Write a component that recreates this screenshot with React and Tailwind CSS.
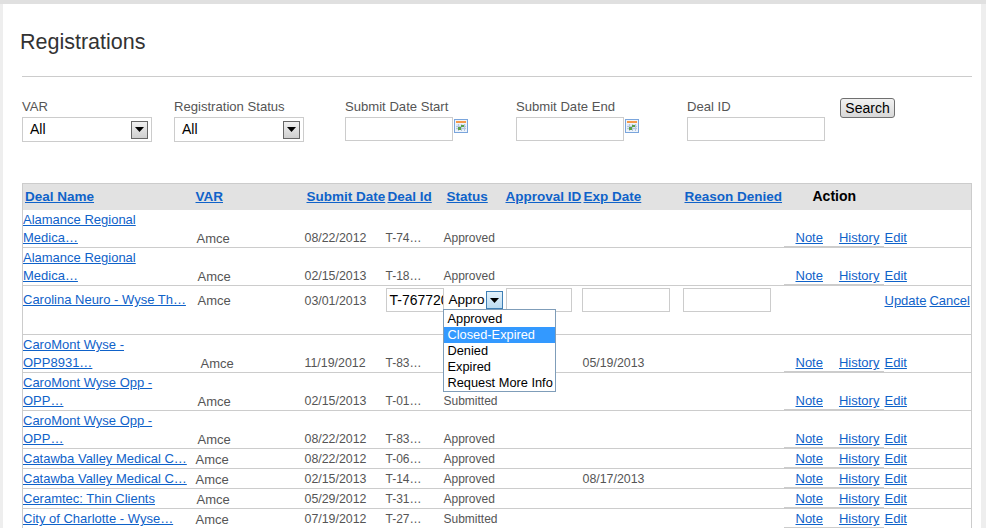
const rows = [
  { name: "Alamance Regional Medica…", var: "Amce", varPad: "pl-[1px]", date: "08/22/2012", id: "T-74…", status: "Approved", tall: true },
  { name: "Alamance Regional Medica…", var: "Amce", varPad: "pl-[2px]", date: "02/15/2013", id: "T-18…", status: "Approved", tall: true },
  { edit: true },
  { name: "CaroMont Wyse - OPP8931…", var: "Amce", varPad: "pl-[5px]", date: "11/19/2012", id: "T-83…", exp: "05/19/2013", tall: true },
  { name: "CaroMont Wyse Opp - OPP…", var: "Amce", varPad: "pl-[2px]", date: "02/15/2013", id: "T-01…", status: "Submitted", tall: true },
  { name: "CaroMont Wyse Opp - OPP…", var: "Amce", varPad: "pl-[2px]", date: "08/22/2012", id: "T-83…", status: "Approved", tall: true },
  { name: "Catawba Valley Medical C…", var: "Amce", varPad: "", date: "08/22/2012", id: "T-06…", status: "Approved" },
  { name: "Catawba Valley Medical C…", var: "Amce", varPad: "", date: "02/15/2013", id: "T-14…", status: "Approved", exp: "08/17/2013" },
  { name: "Ceramtec: Thin Clients", var: "Amce", varPad: "pl-[1px]", date: "05/29/2012", id: "T-31…", status: "Approved" },
  { name: "City of Charlotte - Wyse…", var: "Amce", varPad: "", date: "07/19/2012", id: "T-27…", status: "Submitted" },
];

const link = "text-[#0f62c9] underline";

const CalendarIcon = () => (
  <svg width="14" height="14" viewBox="0 0 14 14" className="mt-[2px] ml-[1px] shrink-0">
    <rect x="0.5" y="0.5" width="13" height="13" fill="#eef4fb" stroke="#7aa5dc" />
    <rect x="2" y="2" width="10" height="2" fill="#f5994a" />
    <path d="M2 5h10v6H2z" fill="#dfe8f3" />
    <path d="M4.5 5v7M7.5 5v7M10.5 5v7M2 7.5h10M2 9.5h10" stroke="#b4c6dc" strokeWidth="1" fill="none" />
    <rect x="4" y="8" width="3" height="3" fill="#5aa04a" />
    <rect x="7" y="6" width="3" height="2" fill="#5aa04a" />
  </svg>
);

const SelectArrow = ({ active }) => (
  <span
    className={`flex w-[17px] h-[18px] items-center justify-center border bg-gradient-to-b ${
      active ? "border-[#3f7fb5] from-[#e4f2fb] to-[#bcdcf2]" : "border-[#666] from-[#f0f0f0] to-[#cfcfcf]"
    }`}
  >
    <svg width="9" height="5" viewBox="0 0 9 5">
      <path d="M0 0h9L4.5 5z" fill="#000" />
    </svg>
  </span>
);

const FilterSelect = () => (
  <div className="flex h-[25px] w-[130px] items-center justify-between border border-[#ccc] pl-[7px] pr-[3px] text-[14px] text-black">
    All
    <SelectArrow />
  </div>
);

const Label = ({ children }) => <div className="h-[20px] text-[13.1px] leading-[20px] text-[#555]">{children}</div>;

const HeadLink = ({ pad, children }) => (
  <th className={`text-left align-middle font-bold text-[13.5px] ${pad}`}>
    <span className={`${link} whitespace-nowrap`}>{children}</span>
  </th>
);

const Actions = () => (
  <div className="ml-[1px] flex text-[13px] leading-[16px]">
    <div className="flex w-[100px] border-b border-[#ccc] pl-[12px]">
      <span className={link}>Note</span>
      <span className={`${link} ml-[16px]`}>History</span>
    </div>
    <span className={`${link} ml-[1px]`}>Edit</span>
  </div>
);

export default function App() {
  return (
    <div className="h-[528px] w-[986px] overflow-hidden border-t-[4px] border-[#e0e0e0] bg-[#eeeeee] pl-[3px] pr-[5px] font-['Liberation_Sans',Arial,sans-serif]">
      <div className="h-full bg-white pl-[17px] pr-[9px]">
        <h1 className="pt-[25px] text-[21.5px] leading-[26px] text-[#333]">Registrations</h1>
        <div className="mt-[21px] ml-[2px] border-t border-[#ccc]" />

        <div className="mt-[20px] ml-[2px] flex h-[65px] items-start">
          <div className="w-[152px]">
            <Label>VAR</Label>
            <FilterSelect />
          </div>
          <div className="w-[171px]">
            <Label>Registration Status</Label>
            <FilterSelect />
          </div>
          <div className="w-[171px]">
            <Label>Submit Date Start</Label>
            <div className="flex">
              <div className="h-[24px] w-[108px] border border-[#ccc]" />
              <CalendarIcon />
            </div>
          </div>
          <div className="w-[171px]">
            <Label>Submit Date End</Label>
            <div className="flex">
              <div className="h-[24px] w-[108px] border border-[#ccc]" />
              <CalendarIcon />
            </div>
          </div>
          <div className="w-[153px]">
            <Label>Deal ID</Label>
            <div className="h-[24px] w-[138px] border border-[#ccc]" />
          </div>
          <button className="mt-[1px] h-[20px] w-[55px] rounded-[3px] border border-[#707070] bg-gradient-to-b from-[#f2f2f2] to-[#d8d8d8] text-[14px] leading-[16px] text-black">
            Search
          </button>
        </div>

        <table className="mt-[21px] ml-[2px] w-[950px] table-fixed border-collapse border-x border-[#ccc] text-[13px] text-[#555]">
          <colgroup>
            <col className="w-[173px]" />
            <col className="w-[108px]" />
            <col className="w-[82px]" />
            <col className="w-[58px]" />
            <col className="w-[62px]" />
            <col className="w-[76px]" />
            <col className="w-[101px]" />
            <col className="w-[100px]" />
            <col />
          </colgroup>
          <thead>
            <tr className="h-[26px] border-t border-[#ccc] bg-[#e2e2e2] text-[14px]">
              <HeadLink pad="pl-[2px]">Deal Name</HeadLink>
              <HeadLink pad="">VAR</HeadLink>
              <HeadLink pad="pl-[3px]">Submit Date</HeadLink>
              <HeadLink pad="pl-[2px]">Deal Id</HeadLink>
              <HeadLink pad="pl-[3px]">Status</HeadLink>
              <HeadLink pad="">Approval ID</HeadLink>
              <HeadLink pad="pl-[2px]">Exp Date</HeadLink>
              <HeadLink pad="pl-[2px]">Reason Denied</HeadLink>
              <th className="pl-[30px] text-left font-bold text-black">Action</th>
            </tr>
          </thead>
          <tbody>
            {rows.map((row, i) =>
              row.edit ? (
                <tr key={i} className="h-[49px] border-b border-[#ccc] align-top">
                  <td className="pt-[4px]">
                    <span className={`${link} whitespace-nowrap leading-[18px]`}>Carolina Neuro - Wyse Th…</span>
                  </td>
                  <td className="pt-[5px] pl-[2px]">Amce</td>
                  <td className="pt-[6px] pl-[1px] text-[12.4px]">03/01/2013</td>
                  <td className="pt-[2px]">
                    <div className="h-[24px] w-[58px] overflow-hidden whitespace-nowrap border border-[#ccc] pl-[3px] text-[14px] leading-[22px] text-black">
                      T-767720
                    </div>
                  </td>
                  <td className="relative pt-[2px]">
                    <div className="flex h-[24px] w-[60px] items-center justify-between pl-[5px] pr-[1px] text-[13.5px] text-black">
                      Appro
                      <SelectArrow active />
                    </div>
                    <div className="absolute -left-[1px] top-[23px] z-10 w-[113px] border border-[#7f9db9] bg-white pt-[1px] text-[12.8px] leading-[16px] text-black">
                      <div className="pl-[4px]">Approved</div>
                      <div className="bg-[#3399ff] pl-[4px] text-white">Closed-Expired</div>
                      <div className="pl-[4px]">Denied</div>
                      <div className="pl-[4px]">Expired</div>
                      <div className="whitespace-nowrap pl-[4px]">Request More Info</div>
                    </div>
                  </td>
                  <td className="pt-[2px]">
                    <div className="h-[24px] w-[66px] border border-[#ccc]" />
                  </td>
                  <td className="pt-[2px]">
                    <div className="h-[24px] w-[88px] border border-[#ccc]" />
                  </td>
                  <td className="pt-[2px]">
                    <div className="h-[24px] w-[88px] border border-[#ccc]" />
                  </td>
                  <td className="pt-[5px] pl-[102px] whitespace-nowrap">
                    <span className={link}>Update</span>
                    <span className={`${link} ml-[3px]`}>Cancel</span>
                  </td>
                </tr>
              ) : (
                <tr key={i} className={`${row.tall ? "h-[38px]" : "h-[20px]"} border-b border-[#ccc] align-bottom`}>
                  <td className="leading-[18px]">
                    <span className={`${link} ${row.tall ? "block w-[150px]" : "whitespace-nowrap"}`}>{row.name}</span>
                  </td>
                  <td className={`leading-[16px] ${row.varPad}`}>{row.var}</td>
                  <td className="pb-[1px] pl-[1px] text-[12.4px] leading-[16px]">{row.date}</td>
                  <td className="pb-[1px] text-[12px] leading-[16px]">{row.id}</td>
                  <td className="pb-[1px] text-[12px] leading-[16px]">{row.status}</td>
                  <td />
                  <td className="pb-[1px] pl-[1px] text-[12.4px] leading-[16px]">{row.exp}</td>
                  <td />
                  <td>
                    <Actions />
                  </td>
                </tr>
              )
            )}
          </tbody>
        </table>
      </div>
    </div>
  );
}
